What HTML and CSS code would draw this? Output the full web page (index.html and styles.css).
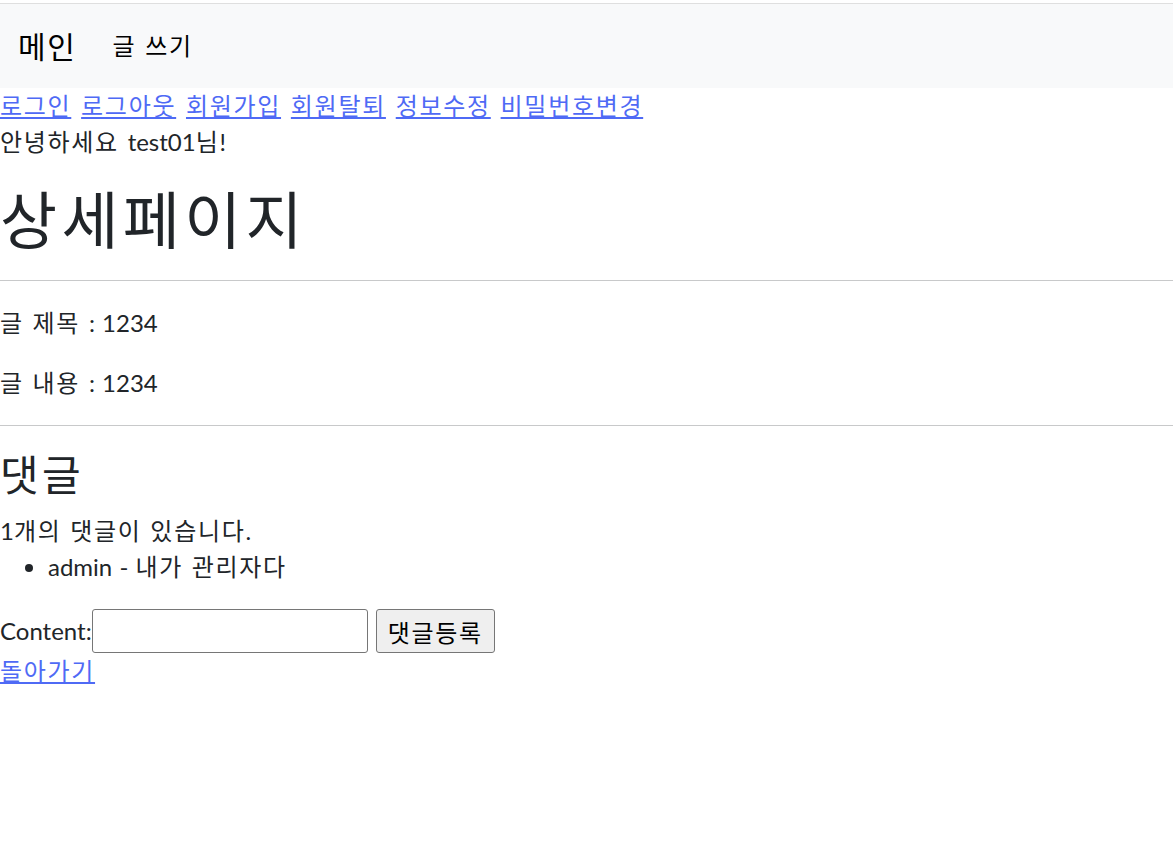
FILE: index.html
```html
<!DOCTYPE html>
<html lang="ko">
<head>
<meta charset="utf-8">
<title>상세페이지</title>
<link rel="stylesheet" href="styles.css">
</head>
<body>
<div class="topline"></div>
<nav class="navbar">
  <div class="navbar-inner">
    <a class="brand" href="#">메인</a>
    <ul class="nav">
      <li><a class="nav-link" href="#">글 쓰기</a></li>
    </ul>
  </div>
</nav>
<div class="auth-links">
  <a href="#">로그인</a> <a href="#">로그아웃</a> <a href="#">회원가입</a> <a href="#">회원탈퇴</a> <a href="#">정보수정</a> <a href="#">비밀번호변경</a>
</div>
<p class="greet">안녕하세요 <span class="en">test01</span>님!</p>
<h1 class="title">상세페이지</h1>
<hr class="divider">
<p class="field">글 제목 <span class="en">: 1234</span></p>
<p class="field">글 내용 <span class="en">: 1234</span></p>
<hr class="divider">
<h3 class="reply-title">댓글</h3>
<div class="reply-count"><span class="en">1</span>개의 댓글이 있습니다.</div>
<ul class="reply-list">
  <li><span class="en">admin - </span>내가 관리자다</li>
</ul>
<form class="reply-form">
  <label class="reply-label en" for="content">Content:</label>
  <input class="reply-input" id="content" type="text">
  <button class="reply-btn" type="button">댓글등록</button>
</form>
<a class="back-link" href="#">돌아가기</a>
</body>
</html>
```
FILE: styles.css
```css
html, body {
  margin: 0;
  padding: 0;
}
body {
  font-family: "Lato", "Noto Sans CJK KR", sans-serif;
  font-size: 24px;
  line-height: 36px;
  color: #212529;
  background: #fff;
  letter-spacing: 0.07em;
  word-spacing: 1px;
}
.en {
  letter-spacing: 0;
}
a {
  color: #4f6af5;
  text-decoration: underline;
}
.topline {
  margin-top: 3px;
  height: 1px;
  background: #dfdfdf;
}
.navbar {
  background: #f8f9fa;
  height: 84px;
  box-sizing: border-box;
  padding: 12px 18px;
}
.navbar-inner {
  display: flex;
  align-items: center;
  height: 60px;
}
.brand {
  font-size: 30px;
  line-height: 45px;
  color: #000;
  text-decoration: none;
  margin-right: 24px;
}
.nav {
  display: flex;
  list-style: none;
  margin: 0;
  padding: 0;
}
.nav-link {
  display: block;
  padding: 12px 12px;
  font-size: 24px;
  line-height: 36px;
  color: #000;
  text-decoration: none;
}
.auth-links {
  line-height: 36px;
  word-spacing: 2px;
}
.greet {
  margin: 0 0 24px;
}
.title {
  font-size: 62px;
  line-height: 72px;
  font-weight: 400;
  letter-spacing: 0.07em;
  margin: 0 0 12px;
}
.divider {
  border: 0;
  border-top: 1px solid #c8c9ca;
  margin: 24px 0;
  height: 0;
}
.field {
  margin: 0 0 24px;
}
.field:last-of-type {
  margin-bottom: 0;
}
.reply-title {
  font-size: 42px;
  line-height: 50px;
  font-weight: 400;
  letter-spacing: 0.08em;
  margin: 0 0 13px;
}
.reply-list {
  margin: 0 0 24px;
  padding-left: 48px;
}
.reply-form {
  display: flex;
  align-items: center;
  height: 44px;
  margin: 0;
}
.reply-label {
  font-size: 24px;
  line-height: 36px;
}
.reply-input {
  box-sizing: border-box;
  width: 276px;
  height: 44px;
  border: 1px solid #767676;
  border-radius: 3px;
  background: #fff;
  padding: 2px 4px;
  font-size: 20px;
  margin: 0 8px 0 0;
}
.reply-btn {
  box-sizing: border-box;
  width: 119px;
  height: 44px;
  border: 1px solid #767676;
  border-radius: 3px;
  background: #efefef;
  font-family: "Lato", "Noto Sans CJK KR", sans-serif;
  font-size: 24px;
  letter-spacing: 0.07em;
  color: #000;
  padding: 0 8px;
  margin: 0;
}
.back-link {
  display: inline-block;
  line-height: 36px;
}
```
